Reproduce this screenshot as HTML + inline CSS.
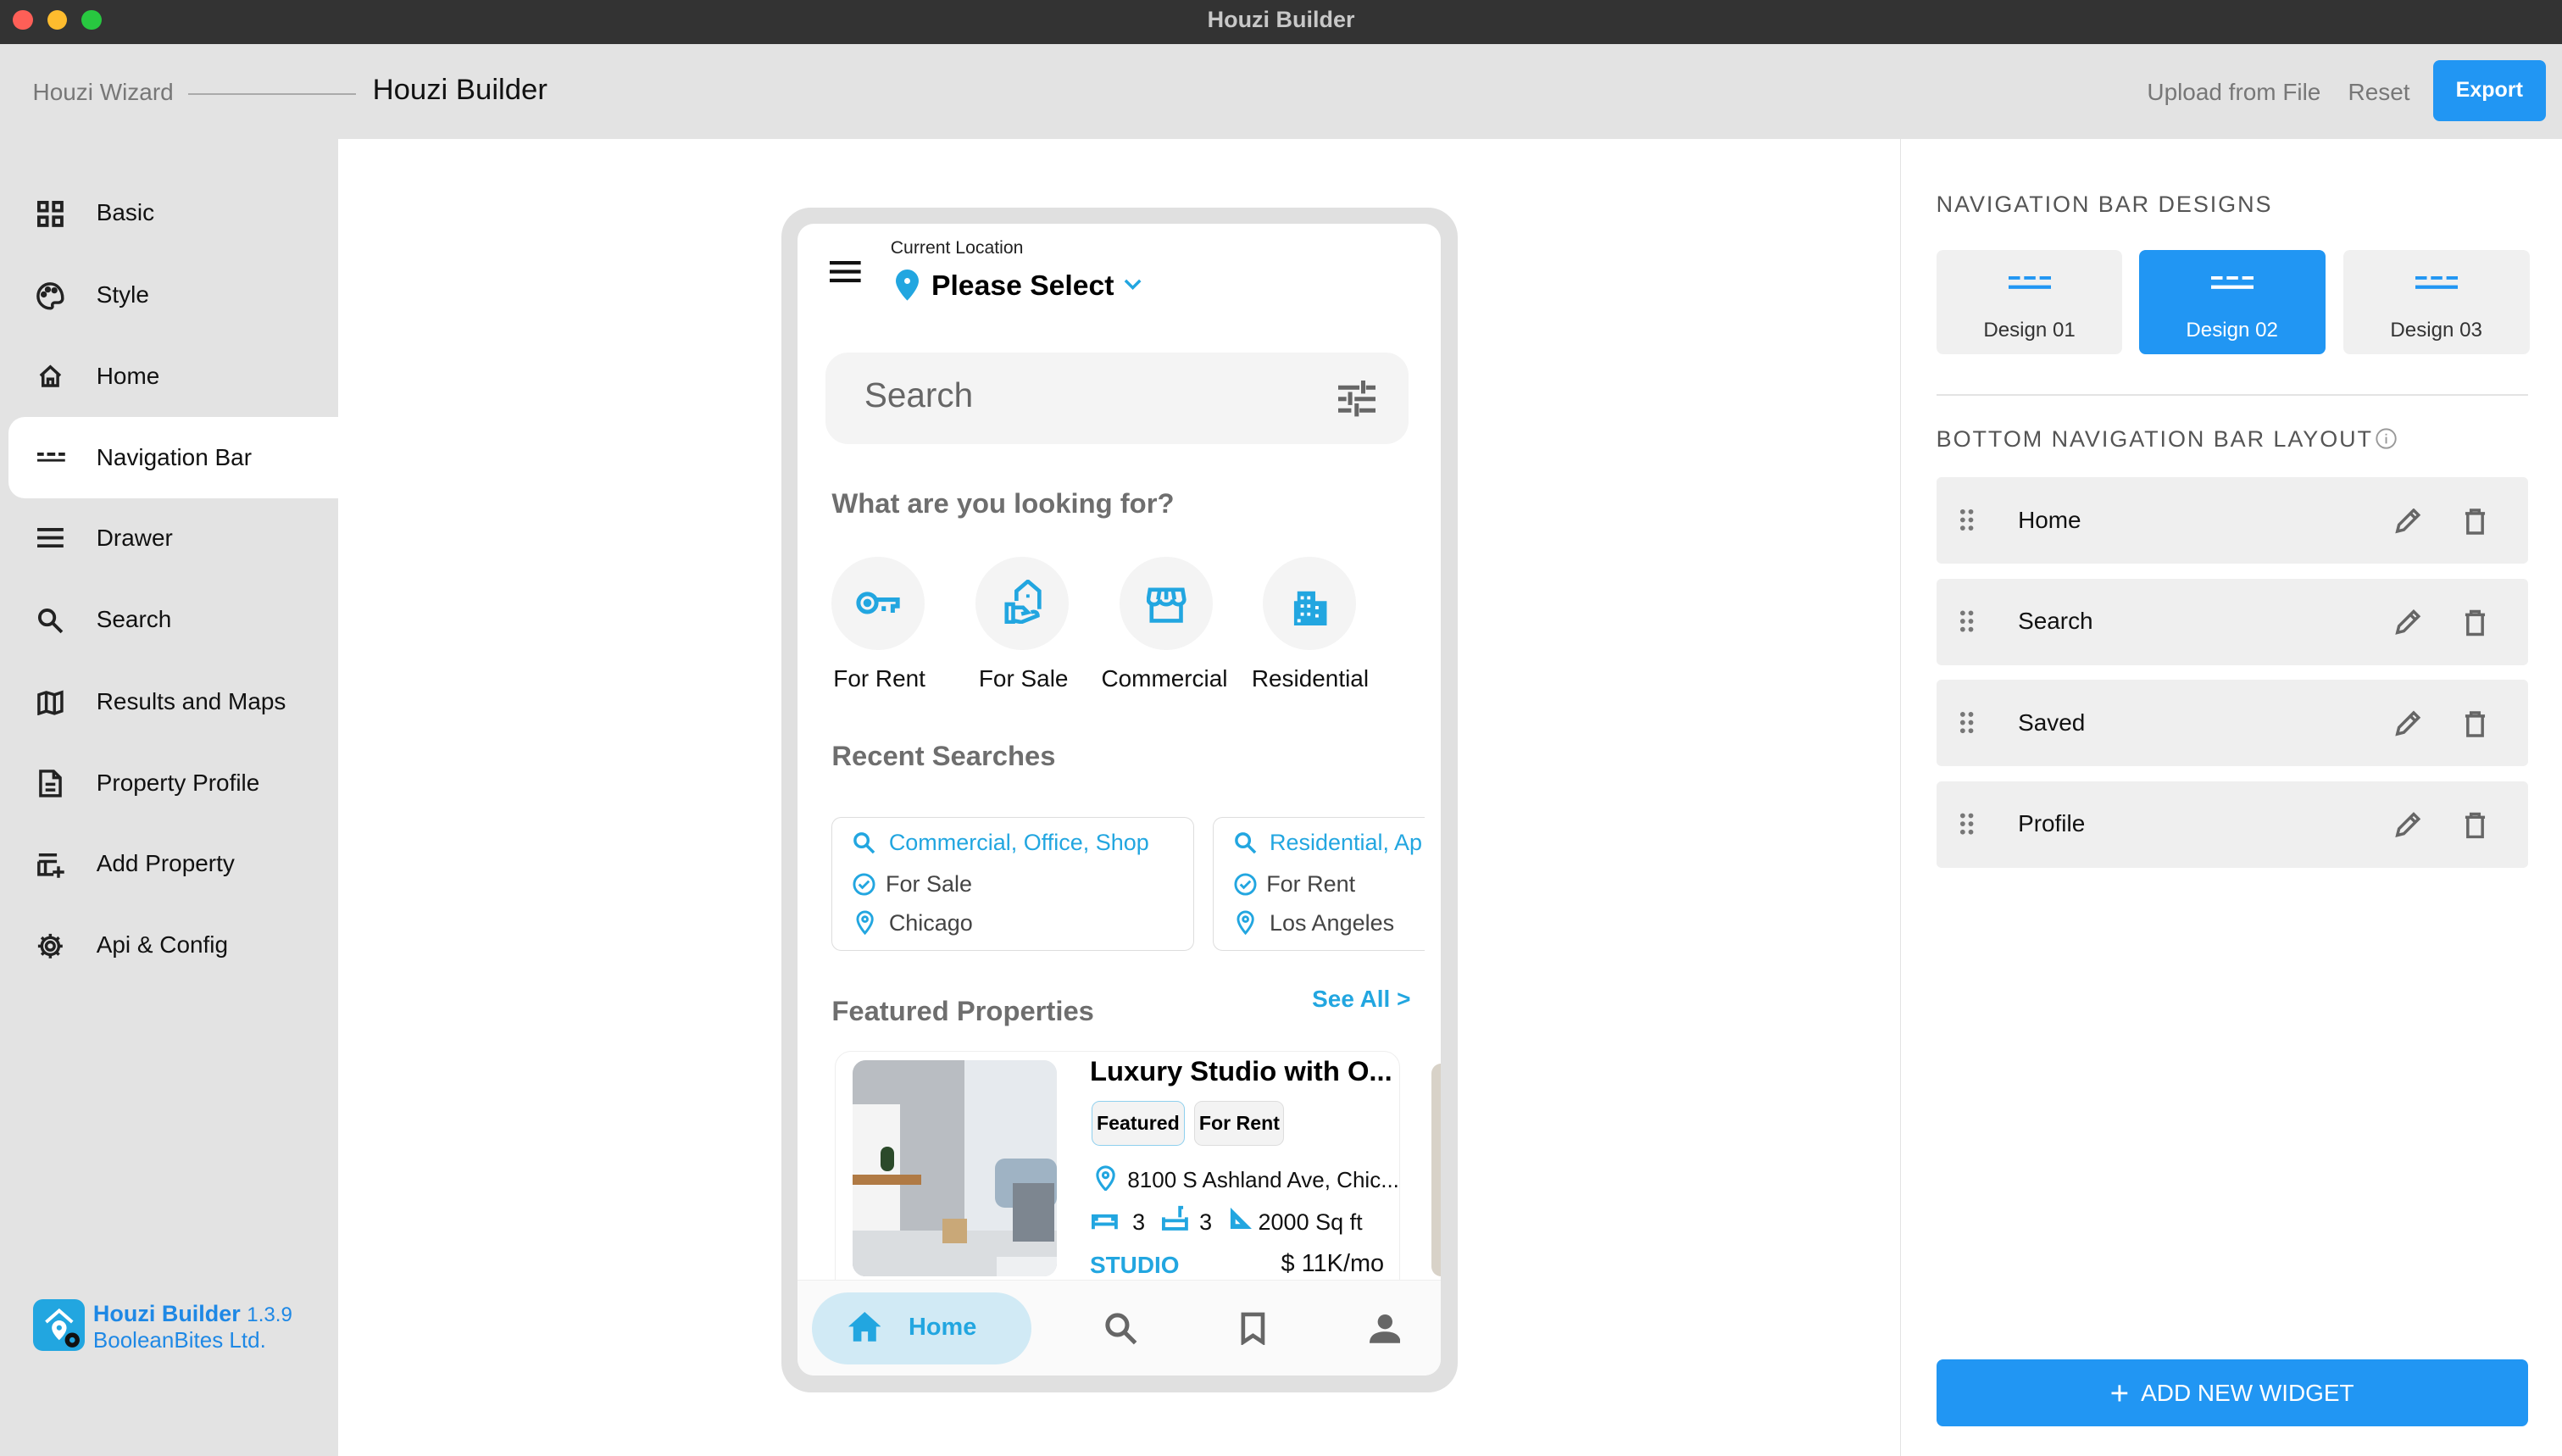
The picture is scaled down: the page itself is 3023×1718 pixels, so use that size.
<!DOCTYPE html>
<html><head><meta charset="utf-8">
<style>
html,body{margin:0;padding:0;}
html{width:3023px;height:1718px;overflow:hidden;background:#fff;}
body{zoom:1.928;width:1568px;height:891px;position:relative;overflow:hidden;font-family:"Liberation Sans",Arial,sans-serif;background:#e3e3e3;}
.a{position:absolute;}
.t{position:absolute;white-space:nowrap;}
svg{display:block;}
.side .t{font-size:14.5px;color:#111;}
.tag{position:absolute;height:26px;border-radius:5px;font-size:12px;font-weight:bold;line-height:26px;text-align:center;background:#f3f3f3;}
.row{position:absolute;left:1185px;width:362px;height:53px;background:#efefef;border-radius:3px;}
.row .nm{position:absolute;left:50px;top:18px;font-size:14.5px;color:#111;}
.card{position:absolute;top:153px;width:114px;height:64px;border-radius:4px;background:#f0f0f0;text-align:center;font-size:12.5px;color:#333;}
</style></head><body>
<div class="a" style="left:0;top:0;width:1568px;height:27px;background:#333;"></div>
<div class="a" style="left:8px;top:6px;width:12px;height:12px;border-radius:6px;background:#fe5f57"></div>
<div class="a" style="left:29px;top:6px;width:12px;height:12px;border-radius:6px;background:#febc2e"></div>
<div class="a" style="left:50px;top:6px;width:12px;height:12px;border-radius:6px;background:#28c840"></div>
<div class="t" style="left:0;width:1568px;text-align:center;top:4px;font-size:14px;font-weight:bold;color:#c8c8c8">Houzi Builder</div>
<div class="t" style="left:20px;top:48px;font-size:14.5px;color:#777">Houzi Wizard</div>
<div class="a" style="left:115px;top:57px;width:103px;height:1px;background:#aaa"></div>
<div class="t" style="left:228px;top:45px;font-size:18px;color:#111">Houzi Builder</div>
<div class="t" style="left:1314px;top:48px;font-size:14.5px;color:#777">Upload from File</div>
<div class="t" style="left:1437px;top:48px;font-size:14.5px;color:#777">Reset</div>
<div class="a" style="left:1489px;top:37px;width:69px;height:37px;border-radius:4px;background:#2196f3;color:#fff;font-size:13px;font-weight:bold;text-align:center;line-height:37px">Export</div>
<div class="side">
<div class="a" style="left:5px;top:255px;width:202px;height:50px;background:#fff;border-radius:10px 0 0 10px"></div>
<svg class="a" style="left:23px;top:123px" width="16" height="16" viewBox="0 0 16 16" fill="none" stroke="#222" stroke-width="2"><rect x="1" y="1" width="5" height="5"/><rect x="10" y="1" width="5" height="5"/><rect x="1" y="10" width="5" height="5"/><rect x="10" y="10" width="5" height="5"/></svg>
<div class="t" style="left:59px;top:122px">Basic</div>
<svg class="a" style="left:22px;top:172px" width="18" height="18" viewBox="0 0 18 18" fill="none" stroke="#222" stroke-width="1.8"><path d="M9 1.5a7.5 7.5 0 1 0 0 15c1 0 1.5-.7 1.3-1.5-.3-1 .3-2 1.5-2H14a2.5 2.5 0 0 0 2.5-2.5C16.5 5 13 1.5 9 1.5z"/><circle cx="5" cy="8" r="1" fill="#222"/><circle cx="7.5" cy="5" r="1" fill="#222"/><circle cx="11.5" cy="5.5" r="1" fill="#222"/></svg>
<div class="t" style="left:59px;top:172px">Style</div>
<svg class="a" style="left:23px;top:222px" width="16" height="16" viewBox="0 0 16 16" fill="none" stroke="#222" stroke-width="1.8"><path d="M2 8L8 2.5 14 8M3.5 7v7h9V7M6.5 14V10h3v4"/></svg>
<div class="t" style="left:59px;top:222px">Home</div>
<svg class="a" style="left:23px;top:277px" width="17" height="6" viewBox="0 0 17 6" fill="#222"><rect x="0" y="0" width="4" height="2"/><rect x="6" y="0" width="5" height="2"/><rect x="13" y="0" width="4" height="2"/><rect x="0" y="4" width="17" height="1.5"/></svg>
<div class="t" style="left:59px;top:272px">Navigation Bar</div>
<svg class="a" style="left:23px;top:323px" width="16" height="12" viewBox="0 0 16 12" fill="#222"><rect y="0" width="16" height="2"/><rect y="5" width="16" height="2"/><rect y="10" width="16" height="2"/></svg>
<div class="t" style="left:59px;top:321px">Drawer</div>
<svg class="a" style="left:23px;top:372px" width="16" height="16" viewBox="0 0 16 16" fill="none" stroke="#222" stroke-width="2"><circle cx="6" cy="6" r="4.5"/><path d="M9.5 9.5L15 15"/></svg>
<div class="t" style="left:59px;top:371px">Search</div>
<svg class="a" style="left:23px;top:422px" width="16" height="16" viewBox="0 0 16 16" fill="none" stroke="#222" stroke-width="1.8"><path d="M1 3l4.5-1.5 5 1.5L15 1.5v11.5l-4.5 1.5-5-1.5L1 14.5z M5.5 1.5v11.5 M10.5 3v11.5"/></svg>
<div class="t" style="left:59px;top:421px">Results and Maps</div>
<svg class="a" style="left:24px;top:471px" width="14" height="17" viewBox="0 0 14 17" fill="none" stroke="#222" stroke-width="1.8"><path d="M1 1h8l4 4v11H1z M9 1v4h4 M4 9h6 M4 12.5h6"/></svg>
<div class="t" style="left:59px;top:471px">Property Profile</div>
<svg class="a" style="left:22px;top:520px" width="18" height="18" viewBox="0 0 18 18" fill="none" stroke="#222" stroke-width="1.8"><path d="M2 3h11 M2 7v8h9 M2 7h11 M6 7v8 M14 10v7 M10.5 13.5h7"/></svg>
<div class="t" style="left:59px;top:520px">Add Property</div>
<svg class="a" style="left:22px;top:570px" width="18" height="18" viewBox="0 0 18 18" fill="none" stroke="#222" stroke-width="1.8"><circle cx="9" cy="9" r="2.5"/><path d="M9 1.5v2.5M9 14v2.5M1.5 9h2.5M14 9h2.5M3.7 3.7l1.8 1.8M12.5 12.5l1.8 1.8M3.7 14.3l1.8-1.8M12.5 5.5l1.8-1.8"/><circle cx="9" cy="9" r="5.2"/></svg>
<div class="t" style="left:59px;top:570px">Api &amp; Config</div>
<div class="a" style="left:20px;top:795px;width:32px;height:32px;border-radius:6px;background:#22a6e0"></div>
<svg class="a" style="left:20px;top:795px" width="32" height="32" viewBox="0 0 32 32"><path d="M8 14l8-7 8 7" fill="none" stroke="#fff" stroke-width="2"/><path d="M16 13a4.5 4.5 0 0 0-4.5 4.5c0 3.5 4.5 7.5 4.5 7.5s4.5-4 4.5-7.5A4.5 4.5 0 0 0 16 13z" fill="#fff"/><circle cx="16" cy="17.5" r="1.6" fill="#22a6e0"/><circle cx="24" cy="25" r="4.5" fill="#111"/><circle cx="24" cy="25" r="1.7" fill="#22a6e0"/></svg>
<div class="t" style="left:57px;top:796px;font-size:14px;color:#1e88e5"><b>Houzi Builder</b> <span style="font-size:12.5px">1.3.9</span></div>
<div class="t" style="left:57px;top:812px;font-size:13.5px;color:#1e88e5">BooleanBites Ltd.</div>
</div>
<div class="a" style="left:207px;top:85px;width:956px;height:806px;background:#fff"></div>
<div class="a" style="left:1163px;top:85px;width:405px;height:806px;background:#fff;border-left:1px solid #e3e3e3"></div>
<div class="a" style="left:478px;top:127px;width:414px;height:725px;border-radius:18px;background:#e0e0e0"></div>
<div class="a" style="left:488px;top:137px;width:394px;height:705px;border-radius:10px;background:#fff;overflow:hidden">
  <svg class="a" style="left:20px;top:23px" width="19" height="13" viewBox="0 0 19 13" fill="#111"><rect width="19" height="2.2"/><rect y="5.4" width="19" height="2.2"/><rect y="10.8" width="19" height="2.2"/></svg>
  <div class="t" style="left:57px;top:9px;font-size:11px;color:#222">Current Location</div>
  <svg class="a" style="left:60px;top:28px" width="14" height="19" viewBox="0 0 14 19"><path d="M7 0a7 7 0 0 0-7 7c0 5 7 12 7 12s7-7 7-12a7 7 0 0 0-7-7z" fill="#22a6e0"/><circle cx="7" cy="7" r="1.8" fill="#fff"/></svg>
  <div class="t" style="left:82px;top:28px;font-size:17.5px;font-weight:bold;color:#000">Please Select</div>
  <svg class="a" style="left:200px;top:33px" width="11" height="8" viewBox="0 0 11 8" fill="none" stroke="#22a6e0" stroke-width="1.8"><path d="M1 1.5l4.5 4.5 4.5-4.5"/></svg>
  <div class="a" style="left:17px;top:79px;width:357px;height:56px;border-radius:14px;background:#f4f4f4"></div>
  <div class="t" style="left:41px;top:93px;font-size:21px;color:#666">Search</div>
  <svg class="a" style="left:331px;top:96px" width="23" height="22" viewBox="0 0 23 22" fill="#666"><rect x="0" y="3" width="13" height="2.6"/><rect x="17" y="3" width="6" height="2.6"/><rect x="14" y="0" width="2.6" height="8"/><rect x="0" y="10" width="5" height="2.6"/><rect x="10" y="10" width="13" height="2.6"/><rect x="6" y="7" width="2.6" height="8"/><rect x="0" y="17" width="8" height="2.6"/><rect x="13" y="17" width="10" height="2.6"/><rect x="10" y="14" width="2.6" height="8"/></svg>
  <div class="t" style="left:21px;top:161px;font-size:17px;font-weight:bold;color:#6e6e6e">What are you looking for?</div>
  <div class="a" style="left:21px;top:204px;width:57px;height:57px;border-radius:50%;background:#f4f4f4"></div>
  <div class="a" style="left:109px;top:204px;width:57px;height:57px;border-radius:50%;background:#f4f4f4"></div>
  <div class="a" style="left:197px;top:204px;width:57px;height:57px;border-radius:50%;background:#f4f4f4"></div>
  <div class="a" style="left:285px;top:204px;width:57px;height:57px;border-radius:50%;background:#f4f4f4"></div>
  <svg class="a" style="left:36px;top:224px" width="27" height="17" viewBox="0 0 27 17" fill="none" stroke="#22a6e0" stroke-width="2.6"><circle cx="7" cy="8" r="5.5"/><circle cx="7" cy="8" r="1.2" fill="#22a6e0"/><path d="M12.5 6h13v4h-3v4 M17 10v3"/></svg>
  <svg class="a" style="left:125px;top:218px" width="26" height="27" viewBox="0 0 26 27" fill="none" stroke="#22a6e0" stroke-width="2.4"><path d="M9 13V7l7-6 7 6v11 M3 15h4v11H3z M7 17h6l3 3-4 1 M7 25l5 1 10-4c0-2-2-3-4-2"/><rect x="15" y="9" width="2" height="2" fill="#22a6e0" stroke="none"/></svg>
  <svg class="a" style="left:214px;top:222px" width="24" height="23" viewBox="0 0 24 23" fill="none" stroke="#22a6e0" stroke-width="2.4"><path d="M2 2h20l1 6c0 2-2 3-3.5 3S16 10 16 8c0 2-2 3-4 3S8 10 8 8c0 2-2 3-3.5 3S1 10 1 8z M8 2l-1 6 M16 2l1 6 M12 2v6 M3 11v10h18V11"/></svg>
  <svg class="a" style="left:303px;top:221px" width="22" height="25" viewBox="0 0 22 25" fill="#22a6e0"><path d="M3 4h11v6h7v15H1V10h2z"/><g fill="#fff"><rect x="5" y="7" width="2" height="2"/><rect x="9" y="7" width="2" height="2"/><rect x="5" y="12" width="2" height="2"/><rect x="9" y="12" width="2" height="2"/><rect x="5" y="17" width="2" height="2"/><rect x="9" y="17" width="2" height="2"/><rect x="14" y="13" width="2" height="2"/><rect x="14" y="18" width="2" height="2"/><rect x="3" y="21" width="2" height="2"/></g></svg>
  <div class="t" style="left:22px;top:270px;font-size:14.5px;color:#111">For Rent</div>
  <div class="t" style="left:111px;top:270px;font-size:14.5px;color:#111">For Sale</div>
  <div class="t" style="left:186px;top:270px;font-size:14.5px;color:#111">Commercial</div>
  <div class="t" style="left:278px;top:270px;font-size:14.5px;color:#111">Residential</div>
  <div class="t" style="left:21px;top:316px;font-size:17px;font-weight:bold;color:#6e6e6e">Recent Searches</div>
  <div class="a" style="left:21px;top:363px;width:221px;height:81px;border:1px solid #ddd;border-radius:6px"></div>
  <div class="a" style="left:254px;top:363px;width:160px;height:81px;border:1px solid #ddd;border-radius:6px"></div>
  <svg class="a" style="left:34px;top:372px" width="14" height="14" viewBox="0 0 14 14" fill="none" stroke="#22a6e0" stroke-width="1.8"><circle cx="5.5" cy="5.5" r="4"/><path d="M8.5 8.5L13 13"/></svg>
  <div class="t" style="left:56px;top:371px;font-size:14px;color:#22a6e0">Commercial, Office, Shop</div>
  <svg class="a" style="left:34px;top:397px" width="14" height="14" viewBox="0 0 14 14" fill="none" stroke="#22a6e0" stroke-width="1.5"><circle cx="7" cy="7" r="6"/><path d="M4 7l2 2 4-4"/></svg>
  <div class="t" style="left:54px;top:396px;font-size:14px;color:#444">For Sale</div>
  <svg class="a" style="left:36px;top:420px" width="11" height="15" viewBox="0 0 11 15" fill="none" stroke="#22a6e0" stroke-width="1.5"><path d="M5.5 1a4.5 4.5 0 0 0-4.5 4.5C1 9 5.5 14 5.5 14S10 9 10 5.5A4.5 4.5 0 0 0 5.5 1z"/><circle cx="5.5" cy="5.5" r="1.5"/></svg>
  <div class="t" style="left:56px;top:420px;font-size:14px;color:#444">Chicago</div>
  <svg class="a" style="left:267px;top:372px" width="14" height="14" viewBox="0 0 14 14" fill="none" stroke="#22a6e0" stroke-width="1.8"><circle cx="5.5" cy="5.5" r="4"/><path d="M8.5 8.5L13 13"/></svg>
  <div class="t" style="left:289px;top:371px;font-size:14px;color:#22a6e0">Residential, Ap</div>
  <svg class="a" style="left:267px;top:397px" width="14" height="14" viewBox="0 0 14 14" fill="none" stroke="#22a6e0" stroke-width="1.5"><circle cx="7" cy="7" r="6"/><path d="M4 7l2 2 4-4"/></svg>
  <div class="t" style="left:287px;top:396px;font-size:14px;color:#444">For Rent</div>
  <svg class="a" style="left:269px;top:420px" width="11" height="15" viewBox="0 0 11 15" fill="none" stroke="#22a6e0" stroke-width="1.5"><path d="M5.5 1a4.5 4.5 0 0 0-4.5 4.5C1 9 5.5 14 5.5 14S10 9 10 5.5A4.5 4.5 0 0 0 5.5 1z"/><circle cx="5.5" cy="5.5" r="1.5"/></svg>
  <div class="t" style="left:289px;top:420px;font-size:14px;color:#444">Los Angeles</div>
  <div class="a" style="left:384px;top:363px;width:10px;height:85px;background:#fff"></div>
  <div class="t" style="left:21px;top:472px;font-size:17px;font-weight:bold;color:#6e6e6e">Featured Properties</div>
  <div class="t" style="left:315px;top:466px;font-size:14.5px;font-weight:bold;color:#22a6e0">See All &gt;</div>
  <div class="a" style="left:23px;top:506px;width:345px;height:160px;border:1px solid #eee;border-radius:10px"></div>
  <div class="a" style="left:388px;top:514px;width:10px;height:130px;border-radius:6px 0 0 6px;background:#d8d2c8"></div>
  <div class="a" style="left:34px;top:512px;width:125px;height:132px;border-radius:8px;overflow:hidden;background:#e9ecef">
    <div class="a" style="left:0;top:0;width:68px;height:132px;background:#b9bdc2"></div>
    <div class="a" style="left:68px;top:0;width:57px;height:132px;background:#e6eaee"></div>
    <div class="a" style="left:0;top:27px;width:29px;height:77px;background:#f4f4f4"></div>
    <div class="a" style="left:0;top:104px;width:125px;height:28px;background:#dadde0"></div>
    <div class="a" style="left:88px;top:120px;width:37px;height:12px;background:#eef0f2"></div>
    <div class="a" style="left:87px;top:60px;width:38px;height:30px;border-radius:6px;background:#9fb3c4"></div>
    <div class="a" style="left:98px;top:75px;width:25px;height:36px;background:#7d8690"></div>
    <div class="a" style="left:0;top:70px;width:42px;height:6px;background:#b07a44"></div>
    <div class="a" style="left:55px;top:97px;width:15px;height:15px;background:#c9a878"></div>
    <div class="a" style="left:17px;top:53px;width:8px;height:15px;background:#2b4a2a;border-radius:4px"></div>
  </div>
  <div class="t" style="left:179px;top:509px;font-size:17px;font-weight:bold;color:#000">Luxury Studio with O...</div>
  <div class="tag" style="left:180px;top:537px;width:56px;border:1px solid #8fd0ee">Featured</div>
  <div class="tag" style="left:243px;top:537px;width:54px;border:1px solid #ddd">For Rent</div>
  <svg class="a" style="left:182px;top:576px" width="13" height="16" viewBox="0 0 13 16" fill="none" stroke="#22a6e0" stroke-width="1.6"><path d="M6.5 1A5 5 0 0 0 1.5 6C1.5 10 6.5 15 6.5 15S11.5 10 11.5 6A5 5 0 0 0 6.5 1z"/><circle cx="6.5" cy="6" r="1.6"/></svg>
  <div class="t" style="left:202px;top:577px;font-size:13.5px;color:#111">8100 S Ashland Ave, Chic...</div>
  <svg class="a" style="left:180px;top:604px" width="16" height="12" viewBox="0 0 16 12" fill="none" stroke="#22a6e0" stroke-width="2"><path d="M1 11V3h14v8 M1 8h14 M3 6V3 M13 6V3"/></svg>
  <div class="t" style="left:205px;top:603px;font-size:14px;color:#111">3</div>
  <svg class="a" style="left:223px;top:600px" width="16" height="16" viewBox="0 0 16 16" fill="none" stroke="#22a6e0" stroke-width="2"><path d="M1 8v7h14V8 M1 10h14 M11 8V2h2"/></svg>
  <div class="t" style="left:246px;top:603px;font-size:14px;color:#111">3</div>
  <svg class="a" style="left:264px;top:601px" width="14" height="14" viewBox="0 0 14 14"><path d="M1 1v13h13z" fill="#22a6e0"/><path d="M4 8v3h3z" fill="#fff"/></svg>
  <div class="t" style="left:282px;top:603px;font-size:14px;color:#111">2000 Sq ft</div>
  <div class="t" style="left:179px;top:629px;font-size:14.5px;font-weight:bold;color:#22a6e0">STUDIO</div>
  <div class="t" style="left:296px;top:628px;font-size:15px;color:#111">$ 11K/mo</div>
  <div class="a" style="left:0;top:646px;width:394px;height:59px;background:#fafafa;border-top:1px solid #eee"></div>
  <div class="a" style="left:9px;top:654px;width:134px;height:44px;border-radius:22px;background:#d1eaf5"></div>
  <svg class="a" style="left:31px;top:666px" width="20" height="18" viewBox="0 0 20 18" fill="#22a6e0"><path d="M10 0L0 9h3v9h5v-6h4v6h5V9h3z"/></svg>
  <div class="t" style="left:68px;top:667px;font-size:15px;font-weight:bold;color:#22a6e0">Home</div>
  <svg class="a" style="left:188px;top:666px" width="20" height="20" viewBox="0 0 20 20" fill="none" stroke="#666" stroke-width="2.6"><circle cx="8" cy="8" r="6"/><path d="M12.5 12.5L19 19"/></svg>
  <svg class="a" style="left:271px;top:666px" width="16" height="20" viewBox="0 0 16 20" fill="none" stroke="#666" stroke-width="2.4"><path d="M2 1.5h12v17l-6-4-6 4z"/></svg>
  <svg class="a" style="left:350px;top:667px" width="19" height="18" viewBox="0 0 19 18" fill="#666"><circle cx="9.5" cy="5" r="4.5"/><path d="M0 18c0-5 4-7 9.5-7S19 13 19 18z"/></svg>
</div>
<div class="t" style="left:1185px;top:117px;font-size:14px;letter-spacing:1px;color:#555">NAVIGATION BAR DESIGNS</div>
<div class="card" style="left:1185px"><svg class="a" style="left:44px;top:16px" width="26" height="8" viewBox="0 0 26 8" fill="#2196f3"><rect width="7" height="2"/><rect x="9.5" width="7" height="2"/><rect x="19" width="7" height="2"/><rect y="5.5" width="26" height="2.2"/></svg><div class="t" style="left:0;width:114px;top:42px">Design 01</div></div>
<div class="card" style="left:1309px;background:#2196f3;color:#fff"><svg class="a" style="left:44px;top:16px" width="26" height="8" viewBox="0 0 26 8" fill="#fff"><rect width="7" height="2"/><rect x="9.5" width="7" height="2"/><rect x="19" width="7" height="2"/><rect y="5.5" width="26" height="2.2"/></svg><div class="t" style="left:0;width:114px;top:42px">Design 02</div></div>
<div class="card" style="left:1434px"><svg class="a" style="left:44px;top:16px" width="26" height="8" viewBox="0 0 26 8" fill="#2196f3"><rect width="7" height="2"/><rect x="9.5" width="7" height="2"/><rect x="19" width="7" height="2"/><rect y="5.5" width="26" height="2.2"/></svg><div class="t" style="left:0;width:114px;top:42px">Design 03</div></div>
<div class="a" style="left:1185px;top:241px;width:362px;height:1px;background:#e3e3e3"></div>
<div class="t" style="left:1185px;top:261px;font-size:14px;letter-spacing:1px;color:#555">BOTTOM NAVIGATION BAR LAYOUT</div>
<svg class="a" style="left:1454px;top:262px" width="13" height="13" viewBox="0 0 13 13" fill="none" stroke="#999" stroke-width="1"><circle cx="6.5" cy="6.5" r="5.8"/><path d="M6.5 5.5v4 M6.5 3.5v1"/></svg>
<div class="row" style="top:292px"><div class="nm">Home</div></div>
<div class="row" style="top:354px"><div class="nm">Search</div></div>
<div class="row" style="top:416px"><div class="nm">Saved</div></div>
<div class="row" style="top:478px"><div class="nm">Profile</div></div>
<svg class="a" style="left:1199px;top:311px" width="300" height="210" viewBox="0 0 300 210">
<defs><g id="dr" fill="#777"><circle cx="2" cy="2" r="1.5"/><circle cx="7" cy="2" r="1.5"/><circle cx="2" cy="7" r="1.5"/><circle cx="7" cy="7" r="1.5"/><circle cx="2" cy="12" r="1.5"/><circle cx="7" cy="12" r="1.5"/></g>
<g id="pe" fill="none" stroke="#666" stroke-width="1.8"><path d="M1 14l1-4 9-9 3 3-9 9z M9 3l3 3"/></g></defs>
<use href="#dr" x="0" y="0"/><use href="#pe" x="267" y="0"/>
<use href="#dr" x="0" y="62"/><use href="#pe" x="267" y="62"/>
<use href="#dr" x="0" y="124"/><use href="#pe" x="267" y="124"/>
<use href="#dr" x="0" y="186"/><use href="#pe" x="267" y="186"/>
</svg>
<svg class="a" style="left:1508px;top:311px" width="15" height="210" viewBox="0 0 15 210" fill="none" stroke="#666" stroke-width="1.8">
<path d="M1 3h12 M4.5 3V1h5v2 M2.5 3v12h9V3"/><path transform="translate(0,62)" d="M1 3h12 M4.5 3V1h5v2 M2.5 3v12h9V3"/><path transform="translate(0,124)" d="M1 3h12 M4.5 3V1h5v2 M2.5 3v12h9V3"/><path transform="translate(0,186)" d="M1 3h12 M4.5 3V1h5v2 M2.5 3v12h9V3"/>
</svg>
<div class="a" style="left:1185px;top:832px;width:362px;height:41px;border-radius:4px;background:#2196f3;color:#fff;font-size:14.5px;text-align:center;line-height:41px"><span style="font-size:20px;vertical-align:-2px">+</span>&nbsp; ADD NEW WIDGET</div>
</body></html>
